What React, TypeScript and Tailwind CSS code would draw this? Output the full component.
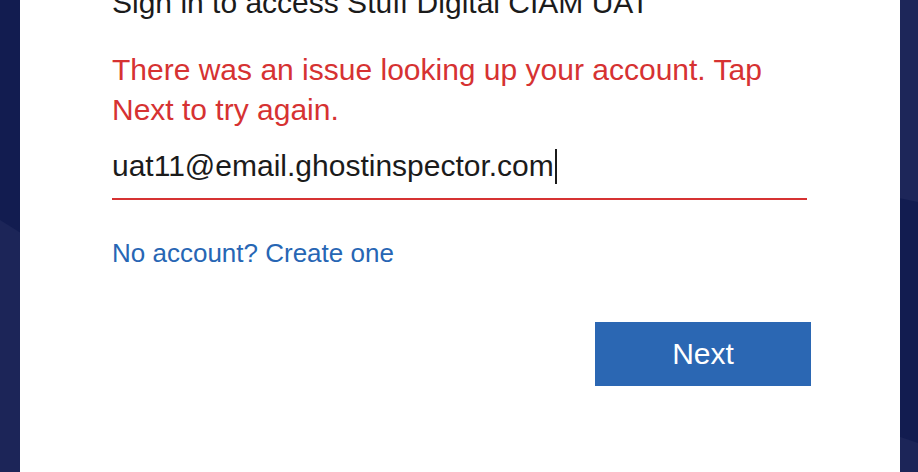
export default function App() {
  return (
    <div className="relative h-[472px] w-full overflow-hidden bg-[#121c50] font-['Liberation_Sans',Arial,sans-serif]">
      {/* background bands */}
      <svg
        className="absolute inset-0 h-full w-full"
        viewBox="0 0 918 472"
        preserveAspectRatio="none"
        aria-hidden="true"
      >
        <polygon points="0,220 40,245 40,472 0,472" fill="#1c2558" />
        <polygon points="880,0 918,0 918,202 880,194" fill="#1d2659" />
        <polygon points="880,430 918,443 918,472 880,472" fill="#1c2558" />
      </svg>

      <div className="relative ml-[20px] mr-[18px] flex h-full flex-col bg-white pl-[92px] pr-[89px]">
        <h1 className="-mt-[17px] text-[30px] leading-[40px] font-normal text-[#1b1b1b]">
          Sign in to access Stuff Digital CIAM UAT
        </h1>

        <p className="mt-[27px] text-[30px] leading-[40px] text-[#d63232]">
          There was an issue looking up your account. Tap Next to try again.
        </p>

        <div className="mt-[16px] mr-[4px] border-b-2 border-[#d63232] pb-[12px]">
          <div className="flex items-center text-[30px] leading-[40px] text-[#1b1b1b]">
            <span>uat11@email.ghostinspector.com</span>
            <span className="ml-[1px] h-[35px] w-[2px] bg-[#1b1b1b]" />
          </div>
        </div>

        <a
          href="#"
          className="mt-[36px] block self-start text-[26px] leading-[34px] text-[#2766b4]"
        >
          No account? Create one
        </a>

        <div className="mt-[52px] flex justify-end">
          <button
            type="button"
            className="h-[64px] w-[216px] bg-[#2b67b3] text-[30px] leading-[40px] text-white"
          >
            Next
          </button>
        </div>
      </div>
    </div>
  );
}
